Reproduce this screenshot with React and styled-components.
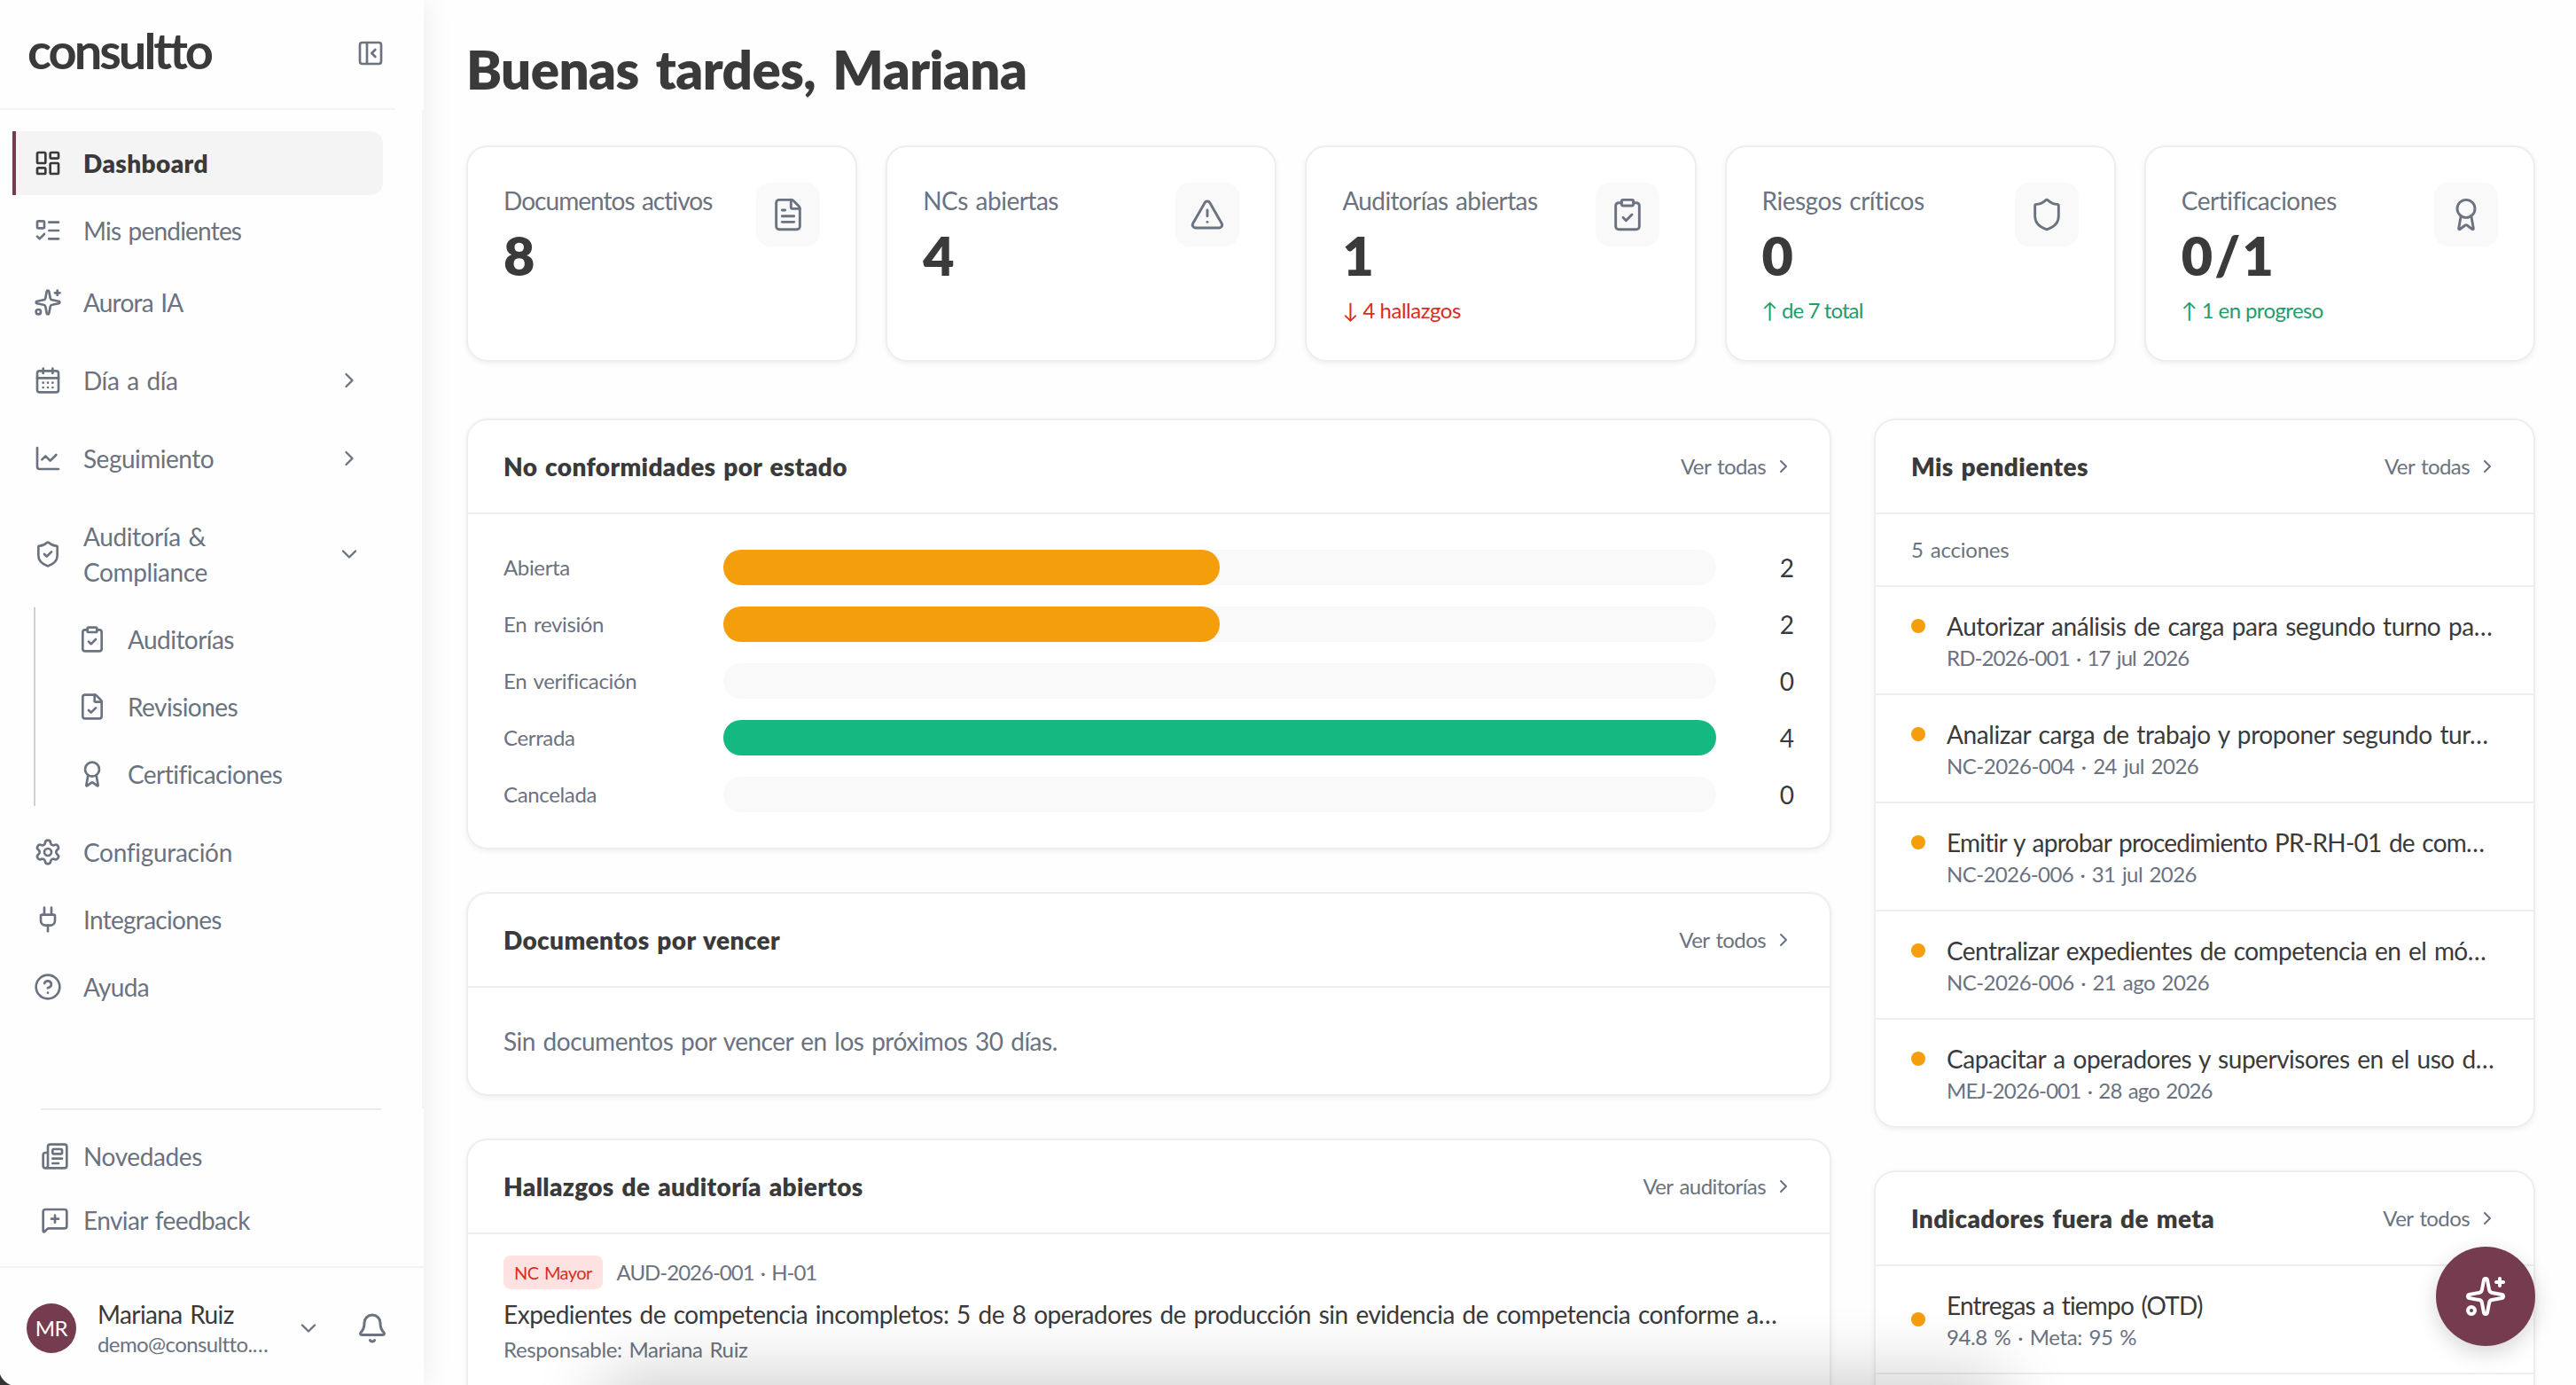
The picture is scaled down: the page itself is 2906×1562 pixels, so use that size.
import React from "react"
import styled, { createGlobalStyle } from "styled-components"
import {
  Award,
  Bell,
  CalendarDays,
  ChartLine,
  ChevronDown,
  ChevronRight,
  CircleQuestionMark,
  ClipboardCheck,
  FileCheck,
  FileText,
  LayoutDashboard,
  ListTodo,
  MessageSquarePlus,
  Newspaper,
  PanelLeftClose,
  Plug,
  Settings,
  Shield,
  ShieldCheck,
  Sparkles,
  TriangleAlert,
} from "lucide-react"

const ink = "#3a3a3b"
const muted = "#6b7280"
const line = "#eeeeee"
const wine = "#753c4f"
const amber = "#f59e0b"
const green = "#14b981"

const tracking = ({ $tracking }) => `letter-spacing: ${$tracking || 0}px;`

const GlobalStyle = createGlobalStyle`
  * {
    box-sizing: border-box;
  }

  body {
    margin: 0;
    background: #fefefe;
    color: ${ink};
    font-family: Lato, "Liberation Sans", sans-serif;
    font-size: 28px;
    line-height: 40px;
    word-spacing: 2px;
    font-variant-ligatures: none;
    overflow: hidden;
  }

  h1, h2, p {
    margin: 0;
  }

  svg {
    flex-shrink: 0;
    display: block;
  }
`

const Page = styled.div`
  position: relative;
  display: flex;
  height: 1562px;
  overflow: hidden;
`

const Sidebar = styled.aside`
  display: flex;
  flex-direction: column;
  width: 478px;
  flex-shrink: 0;
  background: #fefefe;
  color: ${muted};
  box-shadow: 0 0 32px rgba(0, 0, 0, 0.08);
`

const SidebarHeader = styled.div`
  display: flex;
  align-items: center;
  justify-content: space-between;
  width: 446px;
  height: 124px;
  padding: 0 12px 2px 31px;
  border-bottom: 2px solid #f4f4f4;
`

const Logo = styled.div`
  margin-top: -6px;
  color: ${ink};
  font-size: 56px;
  line-height: 64px;
  font-weight: 700;
  letter-spacing: -3px;
`

const Nav = styled.nav`
  display: flex;
  flex-direction: column;
  flex: 1;
  padding: 24px 44px 0 14px;
  border-right: 2px solid #f4f4f4;
`

const NavItem = styled.div`
  display: flex;
  align-items: center;
  gap: 24px;
  width: 418px;
  height: ${({ $tall }) => ($tall ? 112 : 72)}px;
  margin-top: ${({ $gap }) => $gap || 0}px;
  padding: 0 24px 0 ${({ $active }) => ($active ? 20 : 24)}px;
  border-left: ${({ $active }) => ($active ? `4px solid ${wine}` : "none")};
  border-radius: 0 14px 14px 0;
  background: ${({ $active }) => ($active ? "#f4f4f4" : "transparent")};
  color: ${({ $active }) => ($active ? ink : muted)};
  font-weight: ${({ $active }) => ($active ? 800 : 400)};
  ${tracking}
`

const NavLabel = styled.span`
  flex: 1;
`

const SubNav = styled.div`
  display: flex;
  flex-direction: column;
  gap: 4px;
  height: 224px;
  margin: 4px 0 0 24px;
  border-left: 2px solid #d1d1d3;
`

const SubItem = styled.div`
  display: flex;
  align-items: center;
  gap: 24px;
  height: 72px;
  padding-left: 48px;
  letter-spacing: -0.55px;
`

const SidebarLinks = styled.div`
  margin: 0 48px 0 46px;
  padding: 16px 0;
  border-top: 2px solid #ebebeb;
`

const SidebarLink = styled.div`
  display: flex;
  align-items: center;
  gap: 16px;
  height: 72px;
  ${tracking}
`

const UserBar = styled.div`
  display: flex;
  align-items: center;
  height: 134px;
  padding: 3px 40px 0 30px;
  border-top: 2px solid #f3f3f3;
`

const Avatar = styled.div`
  width: 56px;
  height: 56px;
  border-radius: 50%;
  background: ${wine};
  color: #fff;
  font-size: 24px;
  line-height: 56px;
  text-align: center;
  letter-spacing: -0.5px;
`

const UserInfo = styled.div`
  width: 194px;
  margin-left: 24px;
  margin-right: 30px;
`

const UserName = styled.p`
  color: ${ink};
  line-height: 36px;
  letter-spacing: -0.6px;
`

const UserMail = styled.p`
  font-size: 24px;
  line-height: 32px;
  white-space: nowrap;
  letter-spacing: -0.6px;
`

const BellSlot = styled.div`
  margin-left: auto;
`

const Main = styled.main`
  flex: 1;
  min-width: 0;
  padding: 38px 46px 0 48px;
`

const Title = styled.h1`
  height: 126px;
  font-size: 60px;
  line-height: 80px;
  font-weight: 800;
  word-spacing: 6px;
  letter-spacing: -0.6px;
`

const Stats = styled.section`
  display: grid;
  grid-template-columns: repeat(5, 1fr);
  gap: 32px;
  margin-bottom: 64px;
`

const Card = styled.div`
  min-height: ${({ $long }) => ($long ? "400px" : "0")};
  border: 2px solid ${line};
  border-radius: 24px;
  background: #fff;
  box-shadow: 0 2px 6px rgba(0, 0, 0, 0.06);
  overflow: hidden;
`

const Stat = styled(Card)`
  display: flex;
  justify-content: space-between;
  height: 244px;
  padding: 40px;
`

const StatLabel = styled.p`
  color: ${muted};
  white-space: nowrap;
  ${tracking}
`

const StatValue = styled.p`
  margin-top: 6px;
  font-size: 61px;
  line-height: 72px;
  font-weight: 800;
  letter-spacing: 2px;
`

const StatTrend = styled.p`
  margin-top: 10px;
  color: ${({ $down }) => ($down ? "#d92d20" : "#1f9d6b")};
  font-size: 24px;
  line-height: 32px;
  word-spacing: 0;
  ${tracking}
`

const StatIcon = styled.div`
  display: flex;
  align-items: center;
  justify-content: center;
  width: 72px;
  height: 72px;
  flex-shrink: 0;
  border-radius: 16px;
  background: #f9f9f9;
  color: ${muted};
`

const Columns = styled.div`
  display: grid;
  grid-template-columns: 1540px 746px;
  gap: 48px;
`

const Column = styled.div`
  display: flex;
  flex-direction: column;
  gap: 48px;
`

const PanelHeader = styled.div`
  display: flex;
  align-items: center;
  justify-content: space-between;
  height: 106px;
  padding: 0 40px;
  border-bottom: 2px solid ${line};
`

const PanelTitle = styled.h2`
  font-size: 28px;
  line-height: 40px;
  font-weight: 800;
  letter-spacing: 0.35px;
`

const PanelLink = styled.div`
  display: flex;
  align-items: center;
  gap: 8px;
  color: ${muted};
  font-size: 24px;
  letter-spacing: -0.6px;
`

const Chart = styled.div`
  display: flex;
  flex-direction: column;
  gap: 24px;
  padding: 40px;
`

const ChartRow = styled.div`
  display: grid;
  grid-template-columns: 224px 1120px 64px;
  gap: 24px;
  height: 40px;
`

const ChartLabel = styled.span`
  color: ${muted};
  font-size: 24px;
  letter-spacing: -0.35px;
`

const ChartCount = styled.span`
  text-align: right;
`

const Track = styled.div`
  height: 40px;
  border-radius: 20px;
  background: #f9f9f9;
`

const Bar = styled.div`
  height: 100%;
  border-radius: 20px;
  background: ${({ $color }) => $color};
`

const Empty = styled.p`
  padding: 40px;
  color: ${muted};
  letter-spacing: -0.5px;
`

const Finding = styled.div`
  display: flex;
  flex-direction: column;
  padding: 24px 40px;
`

const FindingMeta = styled.div`
  display: flex;
  align-items: center;
  gap: 16px;
  height: 38px;
  margin-bottom: 8px;
  color: ${muted};
  font-size: 24px;
  letter-spacing: -1px;
`

const Badge = styled.span`
  height: 38px;
  padding: 0 12px;
  border-radius: 8px;
  background: #fee2e1;
  color: #d92d20;
  font-size: 20px;
  line-height: 38px;
  letter-spacing: -0.6px;
`

const Count = styled.p`
  height: 82px;
  padding: 0 40px;
  border-bottom: 2px solid ${line};
  color: ${muted};
  font-size: 24px;
  line-height: 80px;
  letter-spacing: -0.2px;
`

const Row = styled.div`
  display: flex;
  align-items: ${({ $center }) => ($center ? "center" : "flex-start")};
  gap: 24px;
  padding: 24px 40px;
  border-bottom: 2px solid ${line};

  &:last-of-type {
    border-bottom: ${({ $center }) => ($center ? `2px solid ${line}` : "none")};
  }
`

const Dot = styled.div`
  width: 16px;
  height: 16px;
  flex-shrink: 0;
  margin-top: ${({ $top }) => $top || 0}px;
  border-radius: 50%;
  background: ${amber};
`

const RowText = styled.div`
  min-width: 0;
`

const RowTitle = styled.p`
  white-space: nowrap;
  ${tracking}
`

const RowMeta = styled.p`
  color: ${muted};
  font-size: 24px;
  line-height: 32px;
  white-space: nowrap;
  ${tracking}
`

const Owner = styled(RowMeta)`
  margin-top: 4px;
`

const Fab = styled.button`
  position: absolute;
  right: 46px;
  bottom: 44px;
  display: flex;
  align-items: center;
  justify-content: center;
  width: 112px;
  height: 112px;
  border: none;
  border-radius: 50%;
  background: ${wine};
  color: #fff;
  box-shadow: 0 8px 24px rgba(0, 0, 0, 0.16);
`

// soft shadow cast by the floating bar below the fold
const BottomShade = styled.div`
  position: absolute;
  left: 690px;
  right: 656px;
  bottom: -120px;
  height: 120px;
  box-shadow: 0 0 80px 10px rgba(0, 0, 0, 0.2);
`

const WindowCorner = styled.div`
  position: absolute;
  left: 0;
  bottom: 0;
  width: 20px;
  height: 20px;
  background: radial-gradient(circle at 100% 0, transparent 21px, #333 22px);
`

const nav = [
  { icon: LayoutDashboard, label: "Dashboard", active: true, spacing: 0.4 },
  { icon: ListTodo, label: "Mis pendientes", gap: 4, spacing: -0.8 },
  { icon: Sparkles, label: "Aurora IA", gap: 9, spacing: -0.8 },
  { icon: CalendarDays, label: "Día a día", gap: 16, spacing: -0.4, chevron: ChevronRight },
  { icon: ChartLine, label: "Seguimiento", gap: 16, spacing: -0.5, chevron: ChevronRight },
  {
    icon: ShieldCheck,
    label: "Auditoría & Compliance",
    gap: 16,
    spacing: -0.4,
    tall: true,
    chevron: ChevronDown,
  },
]

const subNav = [
  { icon: ClipboardCheck, label: "Auditorías" },
  { icon: FileCheck, label: "Revisiones" },
  { icon: Award, label: "Certificaciones" },
]

const navEnd = [
  { icon: Settings, label: "Configuración", gap: 16, spacing: -0.3 },
  { icon: Plug, label: "Integraciones", gap: 4, spacing: -0.7 },
  { icon: CircleQuestionMark, label: "Ayuda", gap: 4, spacing: -0.7 },
]

const stats = [
  { label: "Documentos activos", value: "8", icon: FileText, spacing: -0.95 },
  { label: "NCs abiertas", value: "4", icon: TriangleAlert, spacing: -0.5 },
  {
    label: "Auditorías abiertas",
    value: "1",
    icon: ClipboardCheck,
    spacing: -0.63,
    trend: "↓ 4 hallazgos",
    trendSpacing: -0.5,
    down: true,
  },
  {
    label: "Riesgos críticos",
    value: "0",
    icon: Shield,
    spacing: -0.47,
    trend: "↑ de 7 total",
    trendSpacing: -0.9,
  },
  {
    label: "Certificaciones",
    value: "0/1",
    icon: Award,
    spacing: -0.5,
    trend: "↑ 1 en progreso",
    trendSpacing: -0.6,
  },
]

const states = [
  { label: "Abierta", count: 2, color: amber },
  { label: "En revisión", count: 2, color: amber },
  { label: "En verificación", count: 0 },
  { label: "Cerrada", count: 4, color: green },
  { label: "Cancelada", count: 0 },
]

const tasks = [
  {
    title: "Autorizar análisis de carga para segundo turno pa…",
    meta: "RD-2026-001 · 17 jul 2026",
    spacing: -0.43,
    metaSpacing: -0.9,
  },
  {
    title: "Analizar carga de trabajo y proponer segundo tur…",
    meta: "NC-2026-004 · 24 jul 2026",
    spacing: -0.4,
    metaSpacing: -0.5,
  },
  {
    title: "Emitir y aprobar procedimiento PR-RH-01 de com…",
    meta: "NC-2026-006 · 31 jul 2026",
    spacing: -0.75,
    metaSpacing: -0.6,
  },
  {
    title: "Centralizar expedientes de competencia en el mó…",
    meta: "NC-2026-006 · 21 ago 2026",
    spacing: -0.55,
    metaSpacing: -0.55,
  },
  {
    title: "Capacitar a operadores y supervisores en el uso d…",
    meta: "MEJ-2026-001 · 28 ago 2026",
    spacing: -0.47,
    metaSpacing: -0.85,
  },
]

const NavEntry = ({ icon: Icon, label, active, gap, tall, spacing, chevron: Chevron }) => (
  <NavItem $active={active} $gap={gap} $tall={tall} $tracking={spacing}>
    <Icon size={32} />
    <NavLabel>{label}</NavLabel>
    {/* the wide slot keeps long labels on two lines */}
    {Chevron && <Chevron size={28} />}
  </NavItem>
)

const Panel = ({ title, link, long, children }) => (
  <Card $long={long}>
    <PanelHeader>
      <PanelTitle>{title}</PanelTitle>
      <PanelLink>
        {link}
        <ChevronRight size={24} />
      </PanelLink>
    </PanelHeader>
    {children}
  </Card>
)

const App = () => (
  <Page>
    <GlobalStyle />
    <Sidebar>
      <SidebarHeader>
        <Logo>consultto</Logo>
        <PanelLeftClose size={32} />
      </SidebarHeader>
      <Nav>
        {nav.map(item => (
          <NavEntry key={item.label} {...item} />
        ))}
        <SubNav>
          {subNav.map(({ icon: Icon, label }) => (
            <SubItem key={label}>
              <Icon size={32} />
              {label}
            </SubItem>
          ))}
        </SubNav>
        {navEnd.map(item => (
          <NavEntry key={item.label} {...item} />
        ))}
      </Nav>
      <SidebarLinks>
        <SidebarLink $tracking={-0.4}>
          <Newspaper size={32} />
          Novedades
        </SidebarLink>
        <SidebarLink $tracking={-0.6}>
          <MessageSquarePlus size={32} />
          Enviar feedback
        </SidebarLink>
      </SidebarLinks>
      <UserBar>
        <Avatar>MR</Avatar>
        <UserInfo>
          <UserName>Mariana Ruiz</UserName>
          <UserMail>demo@consultto.…</UserMail>
        </UserInfo>
        <ChevronDown size={28} />
        <BellSlot>
          <Bell size={36} />
        </BellSlot>
      </UserBar>
    </Sidebar>

    <Main>
      <Title>Buenas tardes, Mariana</Title>
      <Stats>
        {stats.map(({ label, value, icon: Icon, spacing, trend, trendSpacing, down }) => (
          <Stat key={label}>
            <div>
              <StatLabel $tracking={spacing}>{label}</StatLabel>
              <StatValue>{value}</StatValue>
              {trend && (
                <StatTrend $down={down} $tracking={trendSpacing}>
                  {trend}
                </StatTrend>
              )}
            </div>
            <StatIcon>
              <Icon size={40} strokeWidth={1.75} />
            </StatIcon>
          </Stat>
        ))}
      </Stats>
      <Columns>
        <Column>
          <Panel title="No conformidades por estado" link="Ver todas">
            <Chart>
              {states.map(({ label, count, color }) => (
                <ChartRow key={label}>
                  <ChartLabel>{label}</ChartLabel>
                  <Track>
                    {count > 0 && (
                      <Bar $color={color} style={{ width: `${(count / 4) * 100}%` }} />
                    )}
                  </Track>
                  <ChartCount>{count}</ChartCount>
                </ChartRow>
              ))}
            </Chart>
          </Panel>
          <Panel title="Documentos por vencer" link="Ver todos">
            <Empty>Sin documentos por vencer en los próximos 30 días.</Empty>
          </Panel>
          <Panel title="Hallazgos de auditoría abiertos" link="Ver auditorías" long>
            <Finding>
              <FindingMeta>
                <Badge>NC Mayor</Badge>
                AUD-2026-001 · H-01
              </FindingMeta>
              <RowTitle $tracking={-0.48}>
                Expedientes de competencia incompletos: 5 de 8 operadores de producción sin evidencia
                de competencia conforme a…
              </RowTitle>
              <Owner $tracking={-0.35}>Responsable: Mariana Ruiz</Owner>
            </Finding>
          </Panel>
        </Column>
        <Column>
          <Panel title="Mis pendientes" link="Ver todas">
            <Count>5 acciones</Count>
            {tasks.map(({ title, meta, spacing, metaSpacing }) => (
              <Row key={title}>
                <Dot $top={12} />
                <RowText>
                  <RowTitle $tracking={spacing}>{title}</RowTitle>
                  <RowMeta $tracking={metaSpacing}>{meta}</RowMeta>
                </RowText>
              </Row>
            ))}
          </Panel>
          <Panel title="Indicadores fuera de meta" link="Ver todos" long>
            <Row $center>
              <Dot />
              <RowText>
                <RowTitle $tracking={-0.8}>Entregas a tiempo (OTD)</RowTitle>
                <RowMeta $tracking={-0.4}>94.8 % · Meta: 95 %</RowMeta>
              </RowText>
            </Row>
          </Panel>
        </Column>
      </Columns>
    </Main>

    <BottomShade />
    <Fab>
      <Sparkles size={48} />
    </Fab>
    <WindowCorner />
  </Page>
)

export default App
